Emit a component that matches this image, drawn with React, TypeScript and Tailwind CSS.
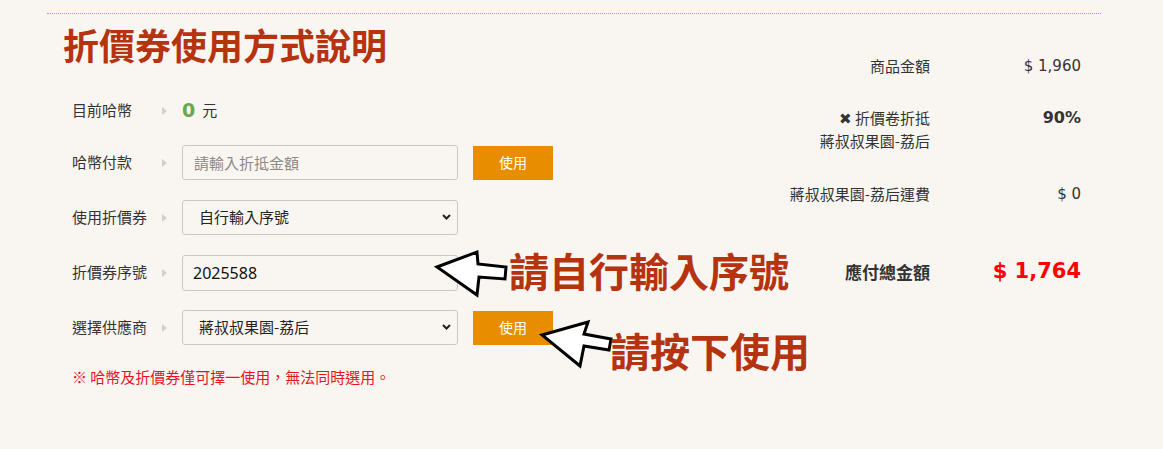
import { ReactNode } from 'react'

function Caret() {
  return <span className="w-0 h-0 border-y-[4px] border-y-transparent border-l-[5px] border-l-[#cfcfcf]" />
}

function Row({ label, children, className = '' }: { label: string; children: ReactNode; className?: string }) {
  return (
    <div className={`flex h-[35px] items-center ${className}`}>
      <div className="w-[90px] text-[15px] text-[#333]">{label}</div>
      <Caret />
      <div className="ml-[15px] flex items-center">{children}</div>
    </div>
  )
}

function UseButton() {
  return (
    <button className="ml-[15px] h-[34px] w-[80px] bg-[#e98d00] text-[14px] text-white">使用</button>
  )
}

function Select({ value }: { value: string }) {
  return (
    <div className="relative">
      <select
        defaultValue={value}
        className="h-[35px] w-[276px] appearance-none rounded-[3px] border border-[#cdc8bf] bg-transparent pl-[16px] text-[15px] text-[#222] outline-none"
      >
        <option>{value}</option>
      </select>
      <svg className="pointer-events-none absolute right-[7px] top-[14px]" width="9" height="6" viewBox="0 0 9 6">
        <path d="M1 1 L4.5 4.5 L8 1" fill="none" stroke="#222" strokeWidth="2" />
      </svg>
    </div>
  )
}

export default function App() {
  return (
    <div className="relative min-h-screen bg-[#f9f6f1] pt-[13px] font-['Noto_Sans_CJK_TC',sans-serif]">
      <div className="ml-[47px] flex w-[1054px] border-t border-dotted border-[#d99a2b]">
        {/* 左側：折抵表單 */}
        <div className="w-[620px]">
          <h1 className="ml-[16px] mt-[12px] text-[36px] font-bold leading-none text-[#b5330f]">折價券使用方式說明</h1>
          <div className="mt-[31px] pl-[25px]">
            <Row label="目前哈幣">
              <span className="font-['DejaVu_Sans',sans-serif] text-[19px] font-bold text-[#6aa84f]">0</span>
              <span className="ml-[7px] text-[15px] text-[#333]">元</span>
            </Row>
            <Row label="哈幣付款" className="mt-[17px]">
              <input
                placeholder="請輸入折抵金額"
                className="h-[35px] w-[276px] rounded-[3px] border border-[#cdc8bf] bg-transparent px-[11px] text-[15px] text-[#222] outline-none placeholder:text-[#8a8a8a]"
              />
              <UseButton />
            </Row>
            <Row label="使用折價券" className="mt-[20px]">
              <Select value="自行輸入序號" />
            </Row>
            <Row label="折價券序號" className="mt-[20px]">
              <input
                defaultValue="2025588"
                className="h-[36px] w-[276px] rounded-[3px] border border-[#cdc8bf] bg-transparent px-[10px] font-['Noto_Sans',sans-serif] text-[16px] text-[#111] outline-none"
              />
            </Row>
            <Row label="選擇供應商" className="mt-[20px]">
              <Select value="蔣叔叔果園-荔后" />
              <UseButton />
            </Row>
            <p className="mt-[22px] text-[15px] leading-[20px] text-[#e8141b]">※ 哈幣及折價券僅可擇一使用，無法同時選用。</p>
          </div>
        </div>

        {/* 右側：金額摘要 */}
        <div className="flex-1 pr-[20px] pt-[41px] text-[15px] text-[#333]">
          <div className="flex h-[22px] items-center">
            <div className="flex-1 text-right">商品金額</div>
            <div className="w-[151px] text-right font-['DejaVu_Sans',sans-serif]">$ 1,960</div>
          </div>
          <div className="mt-[30px] flex leading-[22px]">
            <div className="flex-1 text-right">
              <div><span className="font-['DejaVu_Sans',sans-serif] text-[15px]">✖</span> 折價卷折抵</div>
              <div>蔣叔叔果園-荔后</div>
            </div>
            <div className="w-[151px] text-right font-['DejaVu_Sans',sans-serif] text-[16px] font-bold">90%</div>
          </div>
          <div className="mt-[31px] flex h-[22px] items-center">
            <div className="flex-1 text-right">蔣叔叔果園-荔后運費</div>
            <div className="w-[151px] text-right font-['DejaVu_Sans',sans-serif]">$ 0</div>
          </div>
          <div className="mt-[52px] flex h-[30px] items-center">
            <div className="flex-1 text-right text-[17px] font-semibold">應付總金額</div>
            <div className="w-[151px] text-right font-['DejaVu_Sans',sans-serif] text-[21px] font-bold text-[#f00]">$ 1,764</div>
          </div>
        </div>
      </div>

      {/* 說明標註 */}
      <svg className="pointer-events-none absolute left-0 top-0" width="1163" height="449" viewBox="0 0 1163 449">
        <path d="M437 267 L477 252 L478 264 L506 267 L505 279 L479 277 L477 295 Z" fill="#fff" stroke="#000" strokeWidth="3" strokeLinejoin="miter" />
        <path d="M542 335 L588 322 L584 334 L611 339 L609 350 L584 346 L580 366 Z" fill="#fff" stroke="#000" strokeWidth="3" strokeLinejoin="miter" />
      </svg>
      <div className="absolute left-[509px] top-[250px] text-[40px] font-bold leading-none text-[#b5330f]">請自行輸入序號</div>
      <div className="absolute left-[610px] top-[330px] text-[40px] font-bold leading-none text-[#b5330f]">請按下使用</div>
    </div>
  )
}
